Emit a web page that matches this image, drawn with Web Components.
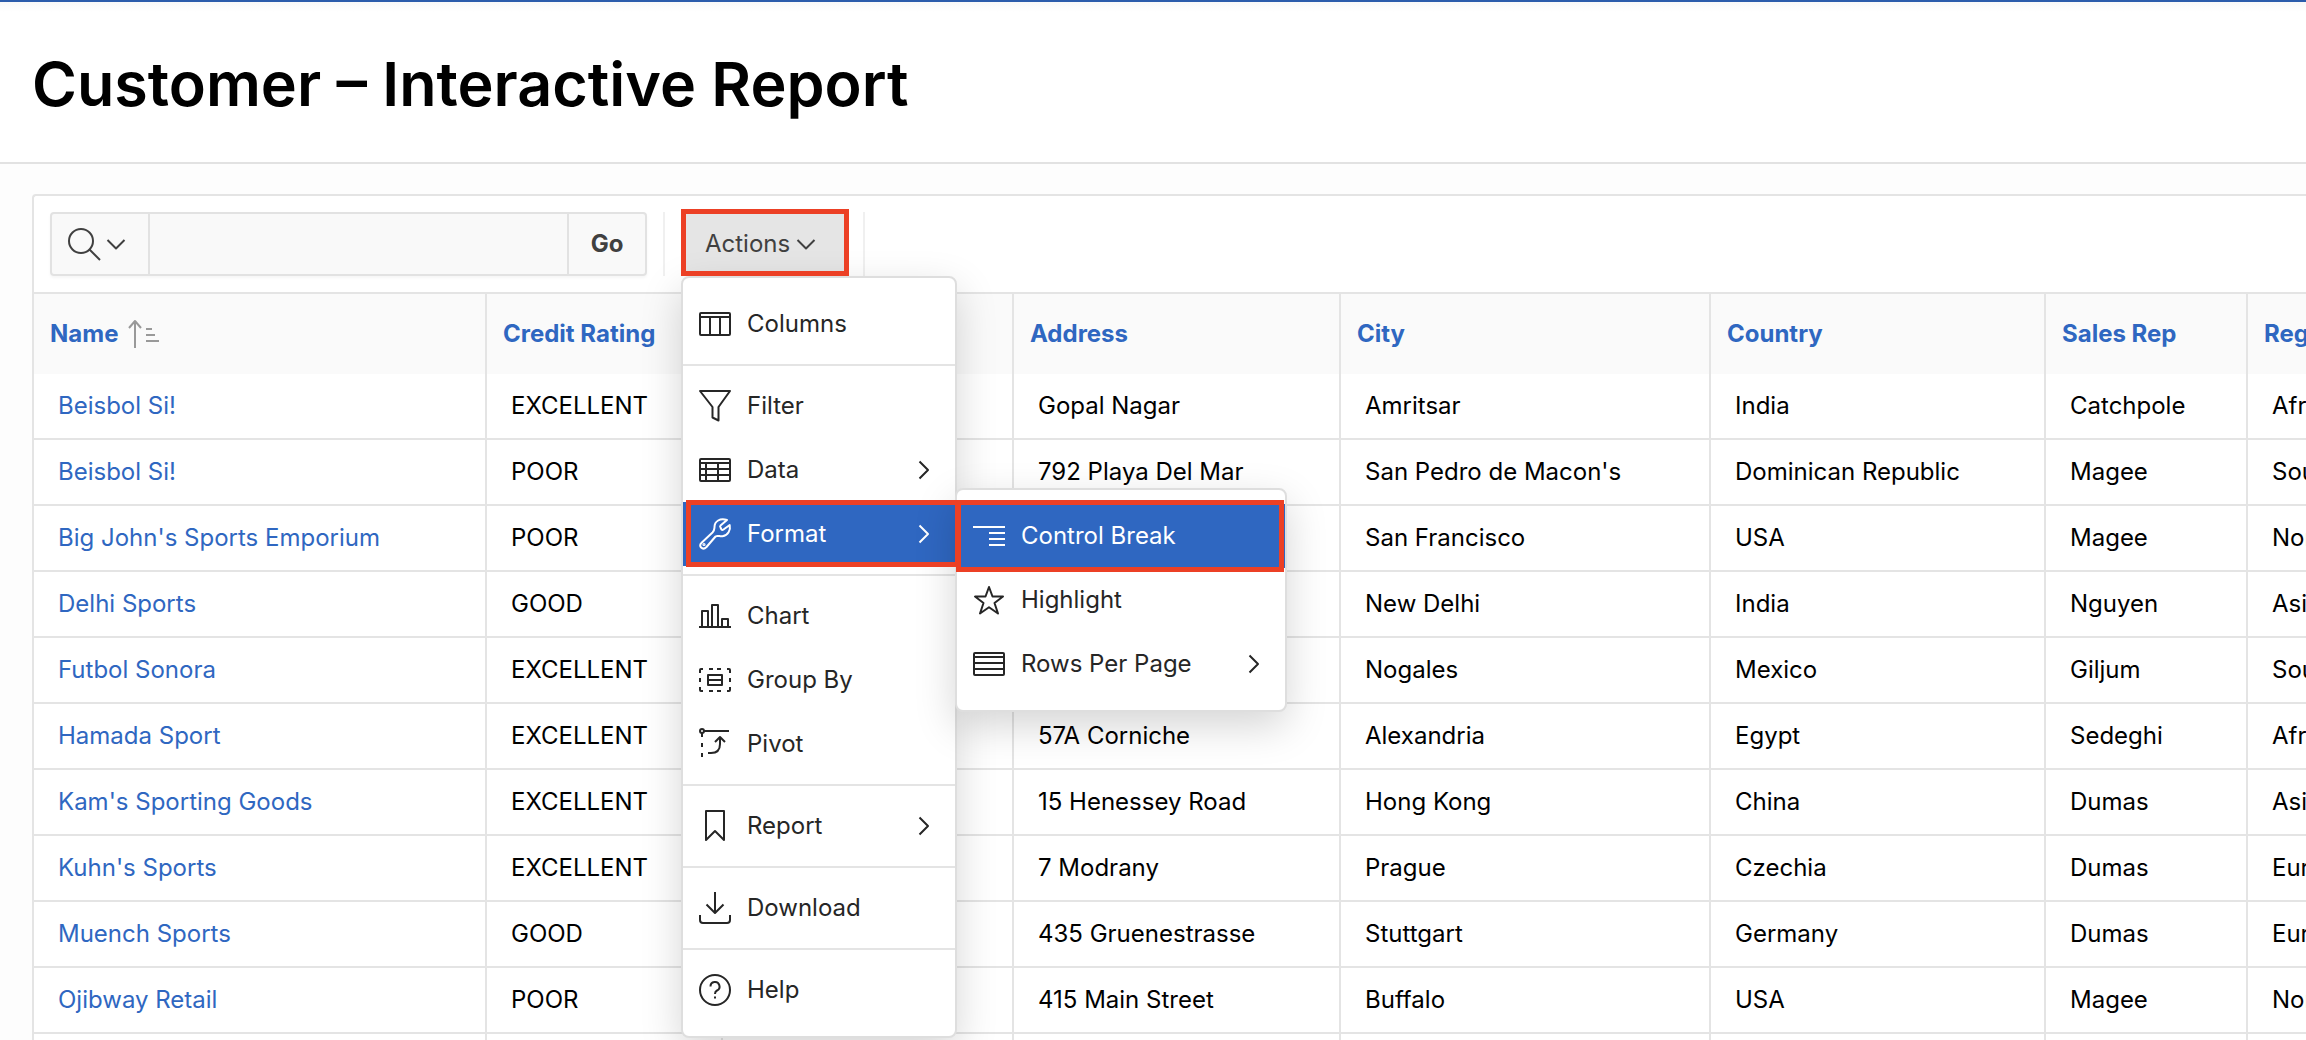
<!DOCTYPE html>
<html lang="en">
<head>
<meta charset="utf-8">
<meta name="viewport" content="width=device-width, initial-scale=1">
<title>Customer – Interactive Report</title>
<style>
  html { height: 100%; overflow: hidden; background: #fdfdfd; }
  body {
    margin: 0;
    height: 100%;
    overflow: hidden;
    font-family: Inter, "Liberation Sans", sans-serif;
    font-size: 24px;
    line-height: 32px;
    color: #000;
    --link: #2f67c1;
    --line: #e4e4e4;
    --mark: #ec4025;
    --ink: #262626;
    --shadow: 0 14px 40px #0000002b;
  }
</style>
</head>
<body>
<page-header>Customer – Interactive Report</page-header>
<report-region>
  <report-toolbar slot="toolbar">
    <search-bar></search-bar>
    <actions-menu>
      <menu-item icon="columns">Columns</menu-item>
      <hr>
      <menu-item icon="filter">Filter</menu-item>
      <menu-item icon="data" more>Data</menu-item>
      <menu-item icon="wrench" more current>Format
        <sub-menu slot="submenu">
          <menu-item icon="break" current>Control Break</menu-item>
          <menu-item icon="star">Highlight</menu-item>
          <menu-item icon="rows" more>Rows Per Page</menu-item>
        </sub-menu>
      </menu-item>
      <hr>
      <menu-item icon="chart">Chart</menu-item>
      <menu-item icon="group">Group By</menu-item>
      <menu-item icon="pivot">Pivot</menu-item>
      <hr>
      <menu-item icon="bookmark" more>Report</menu-item>
      <hr>
      <menu-item icon="download">Download</menu-item>
      <hr>
      <menu-item icon="help">Help</menu-item>
    </actions-menu>
  </report-toolbar>
  <report-table></report-table>
</report-region>

<script>
const ICONS = {
  columns: '<rect x="1" y="5" width="30" height="22" rx="1"/><path d="M1 9H31M11 9V27M21 9V27"/>',
  filter: '<path d="M1 1H31L19.500 17V30.500L13.500 27.500V17Z"/>',
  data: '<rect x="1" y="5" width="30" height="22" rx="1"/><path d="M1 9H31M1 15H31M1 21H31M7 9V27M19 9V27"/>',
  wrench: '<path d="M15.500 9C15.500 3.500 21 -.5 28 2L21.500 7.500Q20.700 8.500 21.500 9.500L22.500 11.500Q23.300 12.300 24.500 11.500L30.700 7C31.800 12 29 17.500 23.500 18.200C20.500 18.600 18.500 17 16.500 18.500L7.500 29C3.500 33 -1.200 28 2.600 24.700L13.500 14.500C15.500 12.500 15.300 11.500 15.500 9Z"/><circle cx="5" cy="26.500" r=".6"/>',
  chart: '<path d="M0 27H32M3 27V11H9V27M13 27V5H19V27M23 27V19H29V27"/>',
  group: '<path d="M1 9V6Q1 5 2 5H4M10 5H14M18 5H22M28 5H30Q31 5 31 6V9M31 14V18M31 23V26Q31 27 30 27H28M22 27H18M14 27H10M4 27H2Q1 27 1 26V23M1 18V14M9 11H23V21H9ZM9 16H23"/>',
  pivot: '<circle cx="3" cy="3" r="2"/><path d="M5 3H30M3 5V9M3 15V19M3 25V29M9 25H12Q21 25 21 16V9M16 14L21 9L26 14"/>',
  bookmark: '<path d="M7 1H25V30L16 21L7 30Z"/>',
  download: '<path d="M16 0V20M7.500 12.500L16 21L24.500 12.500M1 23V28Q1 31 4 31H28Q31 31 31 28V23"/>',
  help: '<circle cx="16" cy="16" r="15"/><path d="M11.500 12.500A4.500 4.500 0 1 1 18 16.500Q16 17.500 16 20M16 22.500V24.500"/>',
  break: '<path d="M0 7H32M16 13H32M16 19H32M16 25H32"/>',
  star: '<path d="M16 3L19.500 12.500H30L21.500 19L25 29.500L16 23.200L7 29.500L10.500 19L2 12.500H12.500Z"/>',
  rows: '<rect x="1" y="5" width="30" height="22" rx="1"/><path d="M1 9H31M1 15H31M1 21H31"/>',
  search: '<circle cx="13" cy="13" r="12"/><path d="M21.500 21.500L32 32"/>',
  down: '<path d="M7.500 12L16 20.500L24.500 12"/>',
  right: '<path d="M12.500 7.500L21 16L12.500 24.500"/>',
  sort: '<path d="M7 30V3M1 10L7 3L13 10M18 11H24M18 17H27M18 23H31"/>'
};

function define(name, html, setup) {
  const template = document.createElement('template');
  template.innerHTML = html;
  customElements.define(name, class extends HTMLElement {
    constructor() {
      super();
      this.attachShadow({ mode: 'open' }).append(template.content.cloneNode(true));
    }
    connectedCallback() { if (setup) setup(this, this.shadowRoot); }
  });
}

define('ui-icon', `<style>
  :host { display: block; flex: none; width: 32px; height: 32px; }
  svg { display: block; width: 100%; height: 100%; overflow: visible; fill: none; stroke: currentColor; stroke-width: 2; stroke-linejoin: round; }
</style><svg viewBox="0 0 32 32" aria-hidden="true"></svg>`,
  (el, root) => { root.querySelector('svg').innerHTML = ICONS[el.getAttribute('name')] || ''; });

define('page-header', `<style>
  :host { display: block; border-top: 2px solid #2b5cab; border-bottom: 2px solid #e2e2e2; padding: 42px 32px 38px; background: linear-gradient(#f8f8f8, #fff 10px); }
  h1 { margin: 0; font-size: 61px; line-height: 80px; font-weight: 600; white-space: nowrap; }
</style><h1><slot></slot></h1>`);

define('report-region', `<style>
  :host { display: block; margin: 30px 0 0 32px; border: 2px solid var(--line); border-right: 0; border-radius: 4px 0 0 4px; background: #fff; }
  .body { overflow: hidden; }
</style><slot name="toolbar"></slot><div class="body"><slot></slot></div>`);

define('report-toolbar', `<style>
  :host { display: flex; gap: 16px; padding: 16px; border-bottom: 2px solid var(--line); }
</style><slot></slot>`);

define('search-bar', `<style>
  :host { display: flex; gap: 16px; }
  form { display: flex; height: 64px; border-radius: 4px; box-shadow: 0 2px 3px #0000000a; }
  form > * { box-sizing: border-box; margin: 0; border: 2px solid #e2e2e2; background: #f9f9f9; font: inherit; color: #404040; }
  .pick { display: flex; align-items: center; width: 100px; padding: 0 4px 0 16px; border-radius: 4px 0 0 4px; }
  input { width: 417px; padding: 0 16px; border-left: 0; border-right: 0; }
  .go { width: 80px; padding: 0; border-radius: 0 4px 4px 0; font-weight: 700; }
  i { width: 2px; background: #f0f0f0; }
</style>
<form><button type="button" class="pick" aria-label="Select columns to search"><ui-icon name="search"></ui-icon><ui-icon name="down"></ui-icon></button><input type="text" aria-label="Search"><button type="button" class="go">Go</button></form><i></i>`);

define('actions-menu', `<style>
  :host { display: flex; gap: 16px; }
  .anchor { position: relative; }
  .open { display: flex; align-items: center; width: 166px; height: 64px; padding: 0 0 0 24px; border: 0; background: #e5e5e5; font: inherit; color: #404040; }
  .mark { position: absolute; z-index: 3; inset: -3px -2px 0 0; border: 5px solid var(--mark); pointer-events: none; }
  .menu { position: absolute; z-index: 2; top: 100%; left: 0; width: 272px; padding: 14px 0; border: 2px solid #dedede; border-radius: 8px; background: #fff; box-shadow: var(--shadow); }
  ::slotted(hr) { height: 2px; margin: 8px 0; border: 0; background: var(--line); }
  i { width: 2px; background: #f0f0f0; }
</style>
<div class="anchor"><button type="button" class="open" aria-haspopup="true" aria-expanded="true">Actions<ui-icon name="down"></ui-icon></button>
<div class="menu" role="menu"><slot></slot></div><div class="mark"></div></div><i></i>`);

define('menu-item', `<style>
  :host { display: block; position: relative; }
  button { display: flex; align-items: center; gap: 16px; box-sizing: border-box; width: 100%; height: 64px; padding: 0 16px; border: 0; background: none; font: inherit; color: var(--ink); text-align: left; white-space: nowrap; }
  span { flex: 1; }
  .more { display: none; }
  :host([more]) .more { display: block; }
  :host([current]) button { background: var(--link); color: #fff; }
  .mark { display: none; position: absolute; z-index: 1; inset: var(--mark-inset, -2px -5px -1px 3px); border: 5px solid var(--mark); pointer-events: none; }
  :host([current]) .mark { display: block; }
</style>
<button type="button" role="menuitem"><ui-icon class="glyph"></ui-icon><span><slot></slot></span><ui-icon class="more" name="right"></ui-icon></button><slot name="submenu"></slot><div class="mark"></div>`,
  (el, root) => {
    const glyph = root.querySelector('.glyph');
    glyph.setAttribute('name', el.getAttribute('icon'));
    glyph.connectedCallback();
  });

define('sub-menu', `<style>
  :host { display: block; position: absolute; top: -14px; left: 100%; width: 328px; padding: 14px 0; border: 2px solid #dedede; border-radius: 8px; background: #fff; box-shadow: var(--shadow); --mark-inset: -4px 1px -4px -1px; }
</style><div role="menu"><slot></slot></div>`);

const HEADS = ['Name', 'Credit Rating', '', 'Address', 'City', 'Country', 'Sales Rep', 'Region'];
const ROWS = [
  ['Beisbol Si!', 'EXCELLENT', '', 'Gopal Nagar', 'Amritsar', 'India', 'Catchpole', 'Africa'],
  ['Beisbol Si!', 'POOR', '', '792 Playa Del Mar', "San Pedro de Macon's", 'Dominican Republic', 'Magee', 'South America'],
  ["Big John's Sports Emporium", 'POOR', '', '', 'San Francisco', 'USA', 'Magee', 'North America'],
  ['Delhi Sports', 'GOOD', '', '', 'New Delhi', 'India', 'Nguyen', 'Asia'],
  ['Futbol Sonora', 'EXCELLENT', '', '', 'Nogales', 'Mexico', 'Giljum', 'South America'],
  ['Hamada Sport', 'EXCELLENT', '', '57A Corniche', 'Alexandria', 'Egypt', 'Sedeghi', 'Africa'],
  ["Kam's Sporting Goods", 'EXCELLENT', '', '15 Henessey Road', 'Hong Kong', 'China', 'Dumas', 'Asia'],
  ["Kuhn's Sports", 'EXCELLENT', '', '7 Modrany', 'Prague', 'Czechia', 'Dumas', 'Europe'],
  ['Muench Sports', 'GOOD', '', '435 Gruenestrasse', 'Stuttgart', 'Germany', 'Dumas', 'Europe'],
  ['Ojibway Retail', 'POOR', '', '415 Main Street', 'Buffalo', 'USA', 'Magee', 'North America'],
  ['', '', '', '', '', '', '', '']
];
const WIDTHS = [451, 236, 291, 327, 370, 335, 202, 240];

define('report-table', `<style>
  :host { display: block; }
  table { table-layout: fixed; width: 2452px; min-width: 100%; border-collapse: separate; border-spacing: 0; }
  th, td { box-sizing: border-box; text-align: left; white-space: nowrap; }
  th { height: 80px; padding: 0 16px; background: #fafafa; font-weight: 700; color: var(--link); }
  td { height: 66px; padding: 0 24px; border-bottom: 2px solid var(--line); }
  th + th, td + td { border-left: 2px solid var(--line); }
  a { color: var(--link); text-decoration: none; }
  .sorted { display: flex; align-items: center; gap: 10px; }
  ui-icon { color: #999; }
</style><table><colgroup></colgroup><thead><tr></tr></thead><tbody></tbody></table>`,
  (el, root) => {
    root.querySelector('colgroup').innerHTML = WIDTHS.map(w => `<col style="width:${w}px">`).join('');
    root.querySelector('thead tr').innerHTML = HEADS.map((h, i) =>
      i ? `<th scope="col">${h}</th>` : `<th scope="col"><div class="sorted">${h}<ui-icon name="sort"></ui-icon></div></th>`).join('');
    root.querySelector('tbody').innerHTML = ROWS.map(r => '<tr>' + r.map((c, i) =>
      `<td>${i || !c ? c : `<a href="#">${c}</a>`}</td>`).join('') + '</tr>').join('');
  });
</script>
</body>
</html>
